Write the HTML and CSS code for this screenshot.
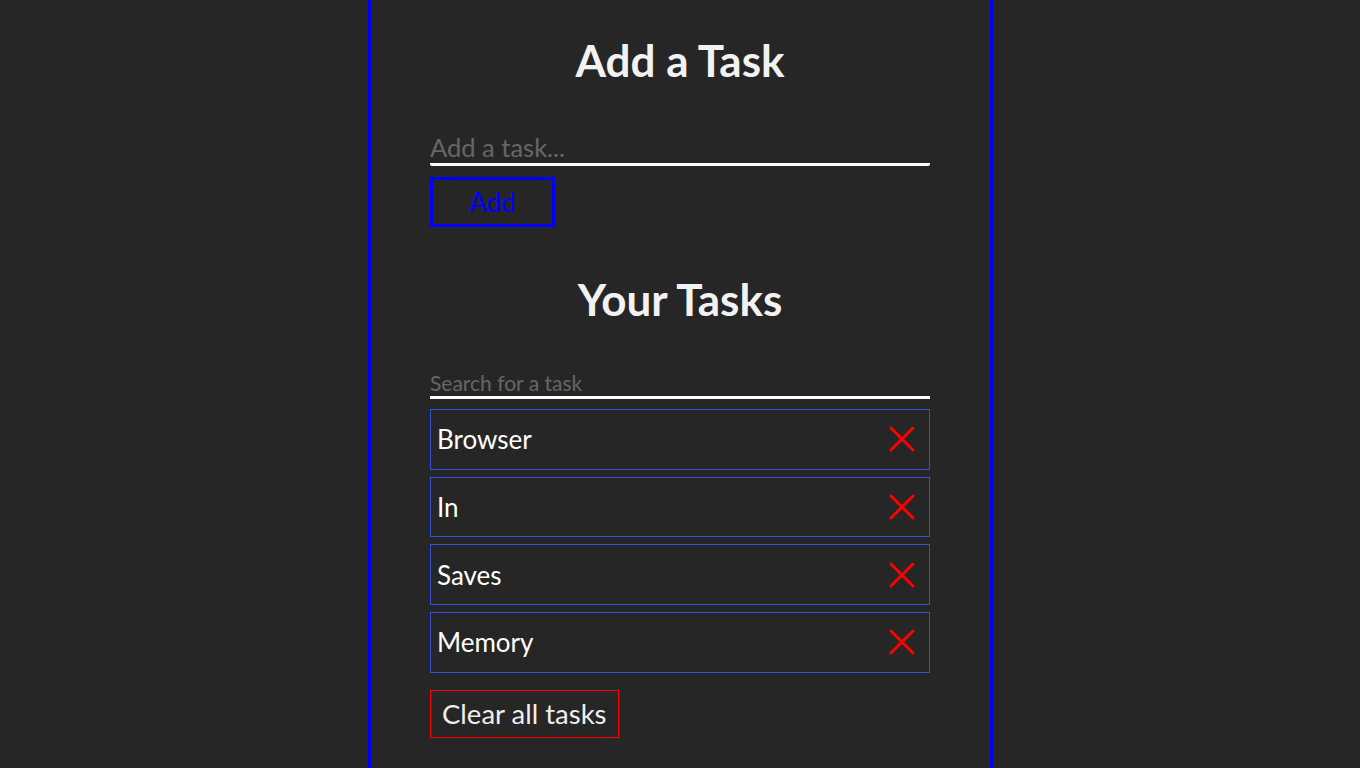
FILE: index.html
```html
<!DOCTYPE html>
<html lang="en">
<head>
<meta charset="utf-8">
<title>Tasks</title>
<link rel="stylesheet" href="styles.css">
</head>
<body>
<main class="app">
  <section class="add">
    <h1 class="title">Add a Task</h1>
    <input class="task-input" type="text" placeholder="Add a task...">
    <button class="add-btn">Add</button>
  </section>
  <section class="list">
    <h1 class="title">Your Tasks</h1>
    <input class="search-input" type="text" placeholder="Search for a task">
    <ul class="tasks">
      <li class="task"><span>Browser</span><button class="del" aria-label="Delete"><svg viewBox="0 0 28 28" width="28" height="28"><path d="M3 3L25 25M25 3L3 25" stroke="#ff0000" stroke-width="3" stroke-linecap="round"/></svg></button></li>
      <li class="task"><span>In</span><button class="del" aria-label="Delete"><svg viewBox="0 0 28 28" width="28" height="28"><path d="M3 3L25 25M25 3L3 25" stroke="#ff0000" stroke-width="3" stroke-linecap="round"/></svg></button></li>
      <li class="task"><span>Saves</span><button class="del" aria-label="Delete"><svg viewBox="0 0 28 28" width="28" height="28"><path d="M3 3L25 25M25 3L3 25" stroke="#ff0000" stroke-width="3" stroke-linecap="round"/></svg></button></li>
      <li class="task"><span>Memory</span><button class="del" aria-label="Delete"><svg viewBox="0 0 28 28" width="28" height="28"><path d="M3 3L25 25M25 3L3 25" stroke="#ff0000" stroke-width="3" stroke-linecap="round"/></svg></button></li>
    </ul>
    <button class="clear-btn">Clear all tasks</button>
  </section>
</main>
</body>
</html>
```
FILE: styles.css
```css
html, body {
  margin: 0;
  padding: 0;
  background: #262626;
  height: 100%;
}
body {
  font-family: Lato, "Open Sans", sans-serif;
  color: #f2f2f2;
}
.app {
  box-sizing: border-box;
  width: 625px;
  min-height: 100%;
  margin: 0 auto;
  border-left: 3px solid #0000ff;
  border-right: 3px solid #0000ff;
  display: flex;
  flex-direction: column;
  align-items: center;
  padding-top: 32px;
}
.add, .list {
  width: 500px;
  display: flex;
  flex-direction: column;
}
.title {
  margin: 0;
  text-align: center;
  font-size: 44px;
  font-weight: 700;
  line-height: 56px;
  color: #f2f2f2;
}
.task-input {
  margin-top: 43px;
  background: transparent;
  border: none;
  border-bottom: 3px solid #ffffff;
  border-radius: 2px;
  padding: 0;
  height: 32px;
  font-family: inherit;
  font-size: 25.5px;
  color: #fff;
  outline: none;
}
.task-input::placeholder, .search-input::placeholder { color: #666666; }
.add-btn {
  margin-top: 11px;
  width: 125px;
  height: 50px;
  background: transparent;
  border: 3px solid #0000ff;
  color: #0000ff;
  font-family: inherit;
  font-size: 26px;
  padding: 0;
}
.list { margin-top: 44px; }
.search-input {
  margin-top: 41px;
  background: transparent;
  border: none;
  border-bottom: 3px solid #ffffff;
  padding: 0;
  height: 28px;
  font-family: inherit;
  font-size: 21px;
  color: #fff;
  outline: none;
}
.tasks {
  list-style: none;
  margin: 10px 0 0;
  padding: 0;
  display: flex;
  flex-direction: column;
  gap: 7px;
}
.task {
  box-sizing: border-box;
  height: 60.67px;
  border: 1px solid #3050d8;
  display: flex;
  align-items: center;
  justify-content: space-between;
  padding: 0 13px 0 6px;
  font-size: 26px;
  color: #ffffff;
}
.del {
  background: none;
  border: none;
  padding: 0;
  width: 28px;
  height: 28px;
  display: flex;
}
.clear-btn {
  align-self: flex-start;
  margin-top: 17px;
  background: transparent;
  border: 1px solid #ff0000;
  color: #eeeeee;
  font-family: inherit;
  font-size: 27.5px;
  padding: 0 11px;
  height: 48px;
}
```
